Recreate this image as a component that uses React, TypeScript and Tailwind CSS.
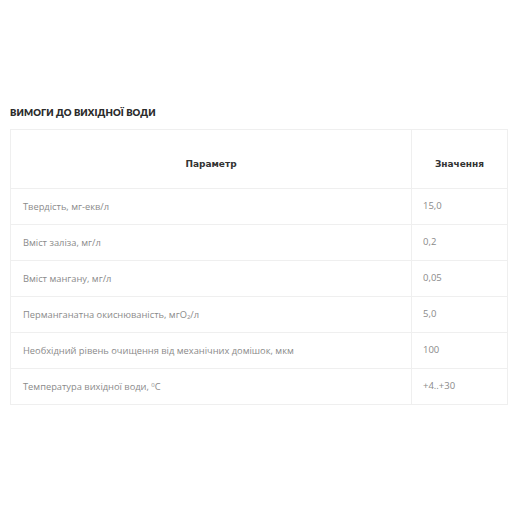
const rows: { name: React.ReactNode; value: string }[] = [
  { name: 'Твердість, мг-екв/л', value: '15,0' },
  { name: 'Вміст заліза, мг/л', value: '0,2' },
  { name: 'Вміст мангану, мг/л', value: '0,05' },
  {
    name: (
      <>
        Перманганатна окиснюваність, мгO<sub className="text-[6px]">2</sub>/л
      </>
    ),
    value: '5,0',
  },
  { name: 'Необхідний рівень очищення від механічних домішок, мкм', value: '100' },
  {
    name: (
      <>
        Температура вихідної води, <sup className="text-[6px]">0</sup>C
      </>
    ),
    value: '+4..+30',
  },
];

export default function App() {
  return (
    <div className="w-[523px] h-[523px] bg-white pt-[106px] px-[10px] font-['Open_Sans',sans-serif]">
      <h2 className="text-[9.5px] font-extrabold tracking-[0.01em] text-[#2b2b2b] leading-[13px] mb-[10px] font-['Lato',sans-serif]">
        ВИМОГИ ДО ВИХІДНОЇ ВОДИ
      </h2>
      <table className="w-[497px] border-collapse table-fixed">
        <colgroup>
          <col className="w-[401px]" />
          <col className="w-[96px]" />
        </colgroup>
        <thead>
          <tr className="h-[59px]">
            <th className="border border-[#efefef] align-bottom pb-[17px] text-[9px] font-bold text-[#333] font-['DejaVu_Sans',sans-serif]">
              Параметр
            </th>
            <th className="border border-[#efefef] align-bottom pb-[17px] text-[9px] font-bold text-[#333] font-['DejaVu_Sans',sans-serif]">
              Значення
            </th>
          </tr>
        </thead>
        <tbody>
          {rows.map((r, i) => (
            <tr key={i} className="h-[36px]">
              <td className="border border-[#efefef] px-[12px] text-[9.3px] text-[#8a8a8a]">{r.name}</td>
              <td className="border border-[#efefef] px-[11px] text-[9.5px] text-[#8a8a8a]">{r.value}</td>
            </tr>
          ))}
        </tbody>
      </table>
    </div>
  );
}
